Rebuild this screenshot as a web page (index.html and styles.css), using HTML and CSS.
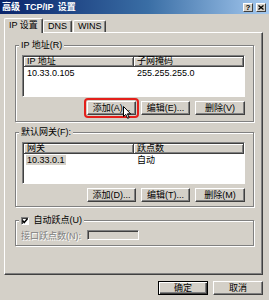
FILE: index.html
```html
<!DOCTYPE html>
<html lang="zh-CN">
<head>
    <meta charset="UTF-8">
    <title>高级 TCP/IP 设置</title>
    <link rel="stylesheet" href="styles.css">
</head>
<body>
    <div class="dialog">
        <div class="titlebar">
            <span class="title">高级 TCP/IP 设置</span>
            <span class="tb-btns">
                <span class="tb-btn">?</span>
                <span class="tb-btn">
                    <svg width="6" height="5" viewBox="0 0 6 5"><path d="M0.5 0.5 L5.5 4.5 M5.5 0.5 L0.5 4.5" stroke="#000" stroke-width="1.3"/></svg>
                </span>
            </span>
        </div>

        <div class="tabs">
            <div class="tab active">IP 设置</div>
            <div class="tab tab-dns">DNS</div>
            <div class="tab tab-wins">WINS</div>
        </div>

        <div class="panel">
            <fieldset class="group">
                <legend>IP 地址(R)</legend>
                <div class="list">
                    <div class="list-head">
                        <span class="col1">IP 地址</span>
                        <span class="col2">子网掩码</span>
                    </div>
                    <div class="list-row">
                        <span class="col1"><span class="cell">10.33.0.105</span></span>
                        <span class="col2">255.255.255.0</span>
                    </div>
                </div>
                <div class="btn-row">
                    <button class="btn hl">添加(A)...
                        <svg class="cursor" width="9" height="13" viewBox="0 0 9 13"><path d="M0.5 0.5 L0.5 10.5 L2.8 8.4 L4.6 12.3 L6.2 11.6 L4.4 7.8 L7.6 7.8 Z" fill="#fff" stroke="#000" stroke-width="1" stroke-linejoin="round"/></svg>
                    </button>
                    <button class="btn">编辑(E)...</button>
                    <button class="btn btn-wide">删除(V)</button>
                </div>
            </fieldset>

            <fieldset class="group group-gw">
                <legend>默认网关(F):</legend>
                <div class="list">
                    <div class="list-head">
                        <span class="col1">网关</span>
                        <span class="col2">跃点数</span>
                    </div>
                    <div class="list-row">
                        <span class="col1"><span class="cell selected">10.33.0.1</span></span>
                        <span class="col2">自动</span>
                    </div>
                </div>
                <div class="btn-row">
                    <button class="btn">添加(D)...</button>
                    <button class="btn">编辑(T)...</button>
                    <button class="btn btn-wide">删除(M)</button>
                </div>
            </fieldset>

            <fieldset class="group group-metric">
                <legend>
                    <span class="checkbox">
                        <svg width="6" height="6" viewBox="0 0 6 6"><path d="M0.5 2.5 L2.2 4.5 L5.5 0.8" fill="none" stroke="#000" stroke-width="1.5"/></svg>
                    </span>
                    自动跃点(U)
                </legend>
                <div class="metric-row">
                    <span class="disabled">接口跃点数(N):</span>
                    <span class="input-disabled"></span>
                </div>
            </fieldset>
        </div>

        <div class="footer">
            <button class="btn btn-foot default">确定</button>
            <button class="btn btn-foot">取消</button>
        </div>
    </div>
</body>
</html>
```

FILE: styles.css
```css
html, body {
    margin: 0;
    padding: 0;
}
body {
    width: 269px;
    height: 300px;
    overflow: hidden;
    background: #d4d0c8;
    font-family: 'Liberation Sans', 'Noto Sans CJK SC', sans-serif;
    font-size: 9px;
    color: #000;
}
.dialog {
    width: 269px;
    height: 300px;
}

/* title bar */
.titlebar {
    height: 14px;
    display: flex;
    align-items: center;
    justify-content: space-between;
    background: linear-gradient(to right, #0a246a, #3a6ea5 55%, #a6caf0);
}
.title {
    padding-left: 2px;
    color: #fff;
    font-weight: bold;
    font-size: 9px;
    line-height: 14px;
    word-spacing: 2px;
}
.tb-btns {
    display: flex;
    gap: 3px;
    padding-right: 3px;
}
.tb-btn {
    width: 10px;
    height: 9px;
    box-sizing: border-box;
    background: #d4d0c8;
    border: 1px solid;
    border-color: #fff #404040 #404040 #fff;
    display: flex;
    align-items: center;
    justify-content: center;
    font-size: 8px;
    font-weight: bold;
    line-height: 7px;
}

/* tabs */
.tabs {
    display: flex;
    align-items: flex-end;
    height: 14px;
    margin-top: 4px;
    padding-left: 4px;
}
.tab {
    height: 12px;
    box-sizing: border-box;
    border: 1px solid;
    border-color: #fff #404040 transparent #fff;
    border-bottom: none;
    border-radius: 2px 2px 0 0;
    box-shadow: inset -1px 0 #808080;
    line-height: 11px;
    padding-left: 4px;
}
.tab.active {
    width: 39px;
    height: 15px;
    margin-bottom: -1px;
    position: relative;
    z-index: 1;
    background: #d4d0c8;
    line-height: 13px;
}
.tab-dns {
    width: 29px;
}
.tab-wins {
    width: 33px;
    margin-left: 1px;
}

/* tab panel */
.panel {
    margin: 0 6px 0 4px;
    height: 243px;
    box-sizing: border-box;
    border: 1px solid;
    border-color: #fff #404040 #404040 #fff;
    box-shadow: inset -1px -1px #808080;
    padding: 7px 8px 0 10px;
}

/* group boxes */
.group {
    margin: 0;
    padding: 5px 8px 6px 6px;
    border: 1px solid #808080;
    box-shadow: inset 1px 1px #fff, 1px 1px #fff;
}
.group legend {
    margin-left: -3px;
    padding: 0 2px;
    line-height: 10px;
    height: 10px;
    background: #d4d0c8;
}
.group-gw {
    margin-top: 5px;
    padding-bottom: 4px;
}
.group-metric {
    margin-top: 8px;
    padding-bottom: 5px;
}

/* list views */
.list {
    height: 42px;
    box-sizing: border-box;
    background: #fff;
    border: 1px solid;
    border-color: #808080 #fff #fff #808080;
    box-shadow: inset 1px 1px #404040;
    padding: 1px 0 0 1px;
}
.list-head {
    display: flex;
    height: 10px;
}
.list-head span {
    box-sizing: border-box;
    height: 10px;
    line-height: 9px;
    background: #d4d0c8;
    border-right: 1px solid #404040;
    border-bottom: 1px solid #404040;
    box-shadow: inset 1px 1px #fff, inset -1px -1px #808080;
    padding-left: 3px;
}
.list-head .col1 {
    width: 110px;
}
.list-head .col2 {
    flex: 1;
    padding-left: 3px;
}
.list-row {
    display: flex;
    height: 11px;
    line-height: 10px;
    padding-top: 1px;
}
.list-row .col1 {
    width: 110px;
    padding-left: 2px;
    box-sizing: border-box;
}
.list-row .col2 {
    padding-left: 3px;
}
.cell {
    display: inline-block;
    padding: 0 1px;
}
.cell.selected {
    background: #d4d0c8;
}

/* buttons */
.btn-row {
    display: flex;
    justify-content: flex-end;
    gap: 5px;
    margin-top: 4px;
}
.btn {
    position: relative;
    width: 49px;
    height: 14px;
    box-sizing: border-box;
    margin: 0;
    padding: 0;
    background: #d4d0c8;
    border: 1px solid;
    border-color: #fff #404040 #404040 #fff;
    box-shadow: inset -1px -1px #808080;
    font-family: inherit;
    font-size: 9px;
    line-height: 12px;
    color: #000;
    text-align: center;
}
.btn-wide {
    width: 50px;
}
.btn.hl {
    outline: 2px solid #e3201b;
    outline-offset: 1px;
    border-radius: 1px;
}
.cursor {
    position: absolute;
    left: 35px;
    top: 4px;
}

/* auto metric group */
.checkbox {
    display: inline-flex;
    align-items: center;
    justify-content: center;
    width: 8px;
    height: 8px;
    box-sizing: border-box;
    vertical-align: -1px;
    margin-right: 2px;
    background: #fff;
    border: 1px solid;
    border-color: #808080 #fff #fff #808080;
    box-shadow: inset 1px 1px #404040;
}
.metric-row {
    display: flex;
    align-items: center;
    height: 10px;
    margin-left: -1px;
}
.disabled {
    width: 66px;
    color: #808080;
    text-shadow: 1px 1px #fff;
}
.input-disabled {
    width: 52px;
    height: 10px;
    box-sizing: border-box;
    background: #d4d0c8;
    border: 1px solid;
    border-color: #808080 #fff #fff #808080;
    box-shadow: inset 1px 1px #404040;
}

/* dialog buttons */
.footer {
    display: flex;
    justify-content: flex-end;
    gap: 5px;
    padding: 6px 6px 0 0;
}
.btn-foot {
    width: 50px;
}
.btn.default {
    border-color: #000;
    box-shadow: inset 1px 1px #fff, inset -1px -1px #404040, inset -2px -2px #808080;
}
```
